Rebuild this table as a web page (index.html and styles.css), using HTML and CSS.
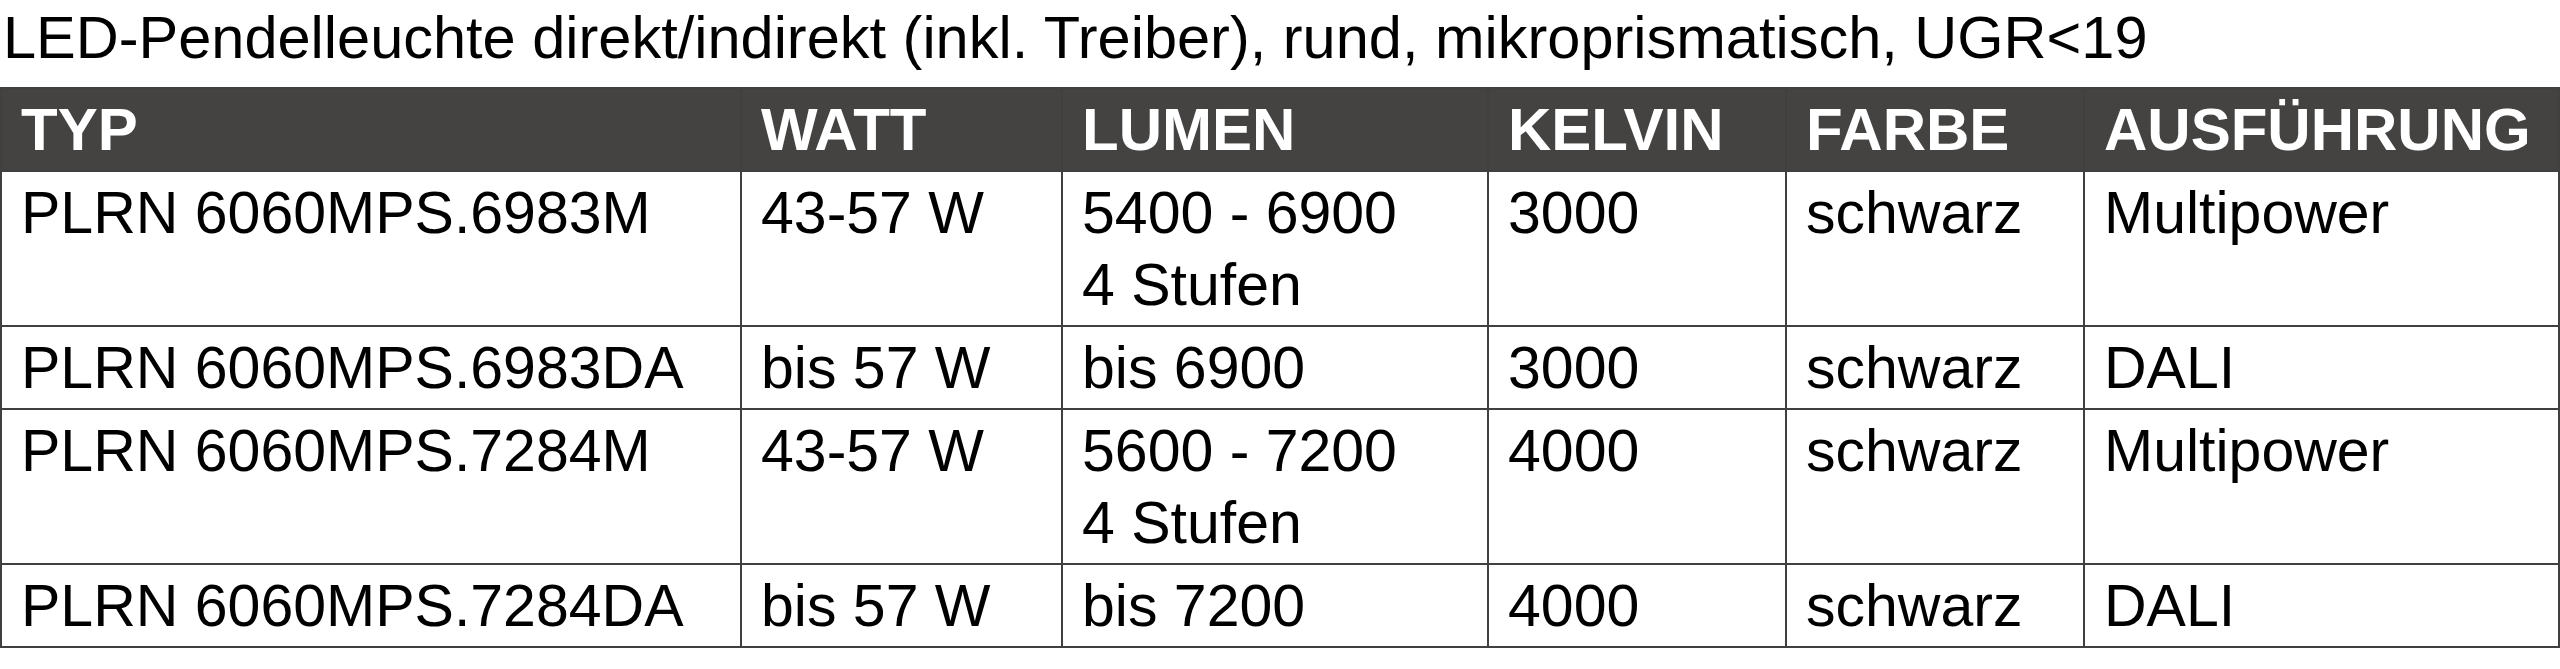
FILE: index.html
```html
<!DOCTYPE html>
<html lang="de">
<head>
<meta charset="utf-8">
<title>LED-Pendelleuchte</title>
<link rel="stylesheet" href="styles.css">
</head>
<body>
<div class="page">
  <h1 class="title">LED-Pendelleuchte direkt/indirekt (inkl. Treiber), rund, mikroprismatisch, UGR&lt;19</h1>
  <table class="spec">
    <colgroup>
      <col class="c-typ"><col class="c-watt"><col class="c-lumen"><col class="c-kelvin"><col class="c-farbe"><col class="c-ausf">
    </colgroup>
    <thead>
      <tr><th>TYP</th><th>WATT</th><th>LUMEN</th><th>KELVIN</th><th>FARBE</th><th>AUSFÜHRUNG</th></tr>
    </thead>
    <tbody>
      <tr><td>PLRN 6060MPS.6983M</td><td>43-57 W</td><td>5400 - 6900<br>4 Stufen</td><td>3000</td><td>schwarz</td><td>Multipower</td></tr>
      <tr><td>PLRN 6060MPS.6983DA</td><td>bis 57 W</td><td>bis 6900</td><td>3000</td><td>schwarz</td><td>DALI</td></tr>
      <tr><td>PLRN 6060MPS.7284M</td><td>43-57 W</td><td>5600 - 7200<br>4 Stufen</td><td>4000</td><td>schwarz</td><td>Multipower</td></tr>
      <tr><td>PLRN 6060MPS.7284DA</td><td>bis 57 W</td><td>bis 7200</td><td>4000</td><td>schwarz</td><td>DALI</td></tr>
    </tbody>
  </table>
</div>
</body>
</html>
```

FILE: styles.css
```css
html, body {
  margin: 0;
  padding: 0;
  background: #ffffff;
}
.page {
  font-family: "Liberation Sans", Arial, sans-serif;
  color: #000;
}
.title {
  margin: 0;
  padding: 0 0 0 3px;
  height: 87px;
  font-size: 59.5px;
  font-weight: normal;
  line-height: 75px;
  white-space: nowrap;
}
.spec {
  border-collapse: collapse;
  table-layout: fixed;
  width: 2558px;
}
.c-typ { width: 740px; }
.c-watt { width: 321px; }
.c-lumen { width: 426px; }
.c-kelvin { width: 298px; }
.c-farbe { width: 298px; }
.c-ausf { width: 475px; }
.spec th, .spec td {
  border: 2px solid #404040;
  text-align: left;
  vertical-align: top;
  padding: 5px 16px 4px 19px;
  font-size: 59px;
  line-height: 72px;
  white-space: nowrap;
}
.spec th {
  background: #454342;
  color: #ffffff;
  font-weight: bold;
  font-size: 60px;
}
.spec td {
  font-weight: normal;
}
```
